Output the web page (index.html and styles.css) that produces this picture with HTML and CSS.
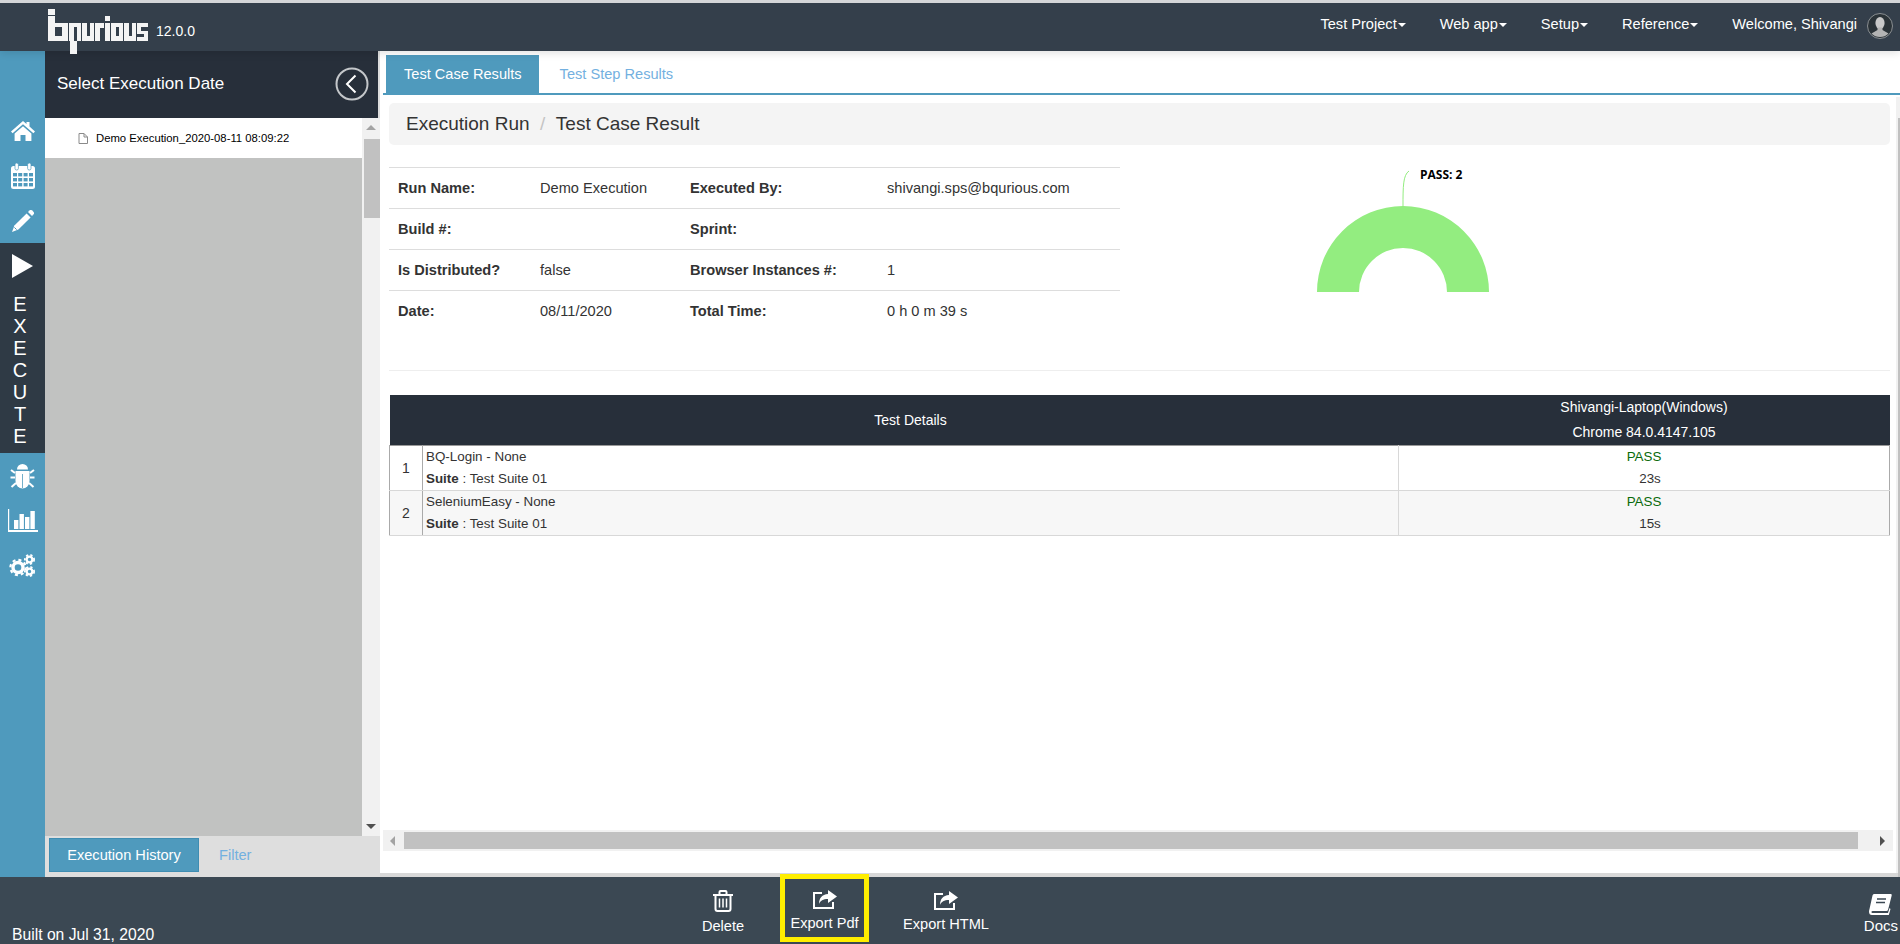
FILE: index.html
```html
<!DOCTYPE html>
<html lang="en">
<head>
  <meta charset="UTF-8">
  <title>bqurious - Test Case Result</title>
  <link rel="stylesheet" href="styles.css">
</head>
<body>
  <!-- Top bar -->
  <header class="topbar">
    <svg class="logo" width="101" height="45" viewBox="0 0 101 45" role="img" aria-label="bqurious">
      <g fill="#f4f4f4">
        <rect x="0" y="0" width="7" height="6"/><rect x="0" y="7" width="7" height="25"/><rect x="7" y="14" width="13" height="4"/><rect x="14" y="18" width="6" height="14"/><rect x="7" y="27" width="7" height="5"/>
        <rect x="21" y="14" width="5" height="18"/><rect x="26" y="14" width="7" height="4"/><rect x="29" y="18" width="4" height="14"/><rect x="22" y="32" width="7" height="13"/>
        <rect x="34" y="14" width="5" height="18"/><rect x="39" y="27" width="3" height="5"/><rect x="42" y="14" width="4" height="18"/>
        <rect x="47" y="14" width="5" height="18"/><rect x="52" y="14" width="4" height="5"/>
        <rect x="57" y="7" width="5" height="5"/><rect x="57" y="14" width="5" height="18"/>
        <rect x="63" y="14" width="5" height="18"/><rect x="68" y="14" width="3" height="4"/><rect x="68" y="27" width="3" height="5"/><rect x="71" y="14" width="4" height="18"/>
        <rect x="76" y="14" width="5" height="18"/><rect x="81" y="27" width="3" height="5"/><rect x="84" y="14" width="4" height="18"/>
        <rect x="89" y="14" width="11" height="4"/><rect x="89" y="18" width="4" height="6"/><rect x="89" y="22" width="11" height="3"/><rect x="96" y="25" width="4" height="7"/><rect x="89" y="28" width="7" height="4"/>
      </g>
    </svg>
    <span class="version">12.0.0</span>
    <nav class="topnav">
      <a class="nav-link">Test Project<i class="caret"></i></a>
      <a class="nav-link">Web app<i class="caret"></i></a>
      <a class="nav-link">Setup<i class="caret"></i></a>
      <a class="nav-link">Reference<i class="caret"></i></a>
      <span class="nav-link">Welcome, Shivangi</span>
      <svg class="avatar" width="26" height="26" viewBox="0 0 26 26">
        <circle cx="13" cy="13" r="12.5" fill="#2b3338" stroke="#8a8f92"/>
        <ellipse cx="13" cy="10" rx="4.6" ry="6" fill="#c9c9c9"/>
        <path d="M10.5 14.5 V17 L4.5 20.5 A12 12 0 0 0 21.5 20.5 L15.5 17 V14.5Z" fill="#b4b4b4"/>
      </svg>
    </nav>
  </header>

  <div class="middle">
    <!-- Icon rail -->
    <aside class="rail">
      <a class="rail-item rail-home">
        <svg width="24" height="20" viewBox="0 0 24 20" fill="#fff"><path d="M12 0 L15.5 3 V1 H18.5 V5.6 L24 10.4 L22.4 12.2 L12 3.2 L1.6 12.2 L0 10.4Z"/><path d="M12 5.2 L20.4 12.4 V20 H14.5 V14 H9.5 V20 H3.6 V12.4Z"/></svg>
      </a>
      <a class="rail-item rail-cal">
        <svg width="24" height="26" viewBox="0 0 24 26">
          <rect x="0" y="3" width="24" height="23" rx="2.5" fill="#fff"/>
          <rect x="4" y="0" width="3.4" height="7" rx="1.6" fill="#fff" stroke="#4f9abd" stroke-width=".7"/><rect x="16.6" y="0" width="3.4" height="7" rx="1.6" fill="#fff" stroke="#4f9abd" stroke-width=".7"/>
          <g fill="#4f9abd"><rect x="2" y="10" width="4" height="3.4"/><rect x="7.2" y="10" width="4" height="3.4"/><rect x="12.6" y="10" width="4" height="3.4"/><rect x="18" y="10" width="4" height="3.4"/><rect x="2" y="15" width="4" height="3.4"/><rect x="7.2" y="15" width="4" height="3.4"/><rect x="12.6" y="15" width="4" height="3.4"/><rect x="18" y="15" width="4" height="3.4"/><rect x="2" y="20" width="4" height="3.4"/><rect x="7.2" y="20" width="4" height="3.4"/><rect x="12.6" y="20" width="4" height="3.4"/><rect x="18" y="20" width="4" height="3.4"/></g>
        </svg>
      </a>
      <a class="rail-item rail-pencil">
        <svg width="22" height="22" viewBox="0 0 22 22" fill="#fff"><path d="M14.6 3.4 L18.6 7.4 L6.4 19.6 L0 22 L2.4 15.6Z"/><path d="M16 2 L17.4 .6 A2 2 0 0 1 20.2 .6 L21.4 1.8 A2 2 0 0 1 21.4 4.6 L20 6Z"/><path d="M2.4 17.4 L4.6 19.6" stroke="#4f9abd" stroke-width="1"/></svg>
      </a>
      <a class="rail-item rail-active">
        <svg width="21" height="24" viewBox="0 0 21 24" fill="#fff"><path d="M0 0 L21 12 L0 24Z"/></svg>
        <span class="rail-word">EXECUTE</span>
      </a>
      <a class="rail-item rail-bug">
        <svg width="25" height="26" viewBox="0 0 25 26" fill="#fff">
          <path d="M7 6.5 A5.5 5.5 0 0 1 18 6.5Z"/><path d="M5.5 8 H19.5 V18 A7 7.5 0 0 1 5.5 18Z"/>
          <g stroke="#fff" stroke-width="2" fill="none"><path d="M5 10 L1 7"/><path d="M20 10 L24 7"/><path d="M5 14.5 H.5"/><path d="M20 14.5 H24.5"/><path d="M6 20 L1.5 24"/><path d="M19 20 L23.5 24"/></g>
          <path d="M12.5 11 V25" stroke="#4f9abd" stroke-width=".8"/>
        </svg>
      </a>
      <a class="rail-item rail-bars">
        <svg width="30" height="23" viewBox="0 0 30 23" fill="#fff"><path d="M0 0 H1.2 V21 H30 V23 H0Z"/><rect x="6" y="11" width="4.4" height="9"/><rect x="11.5" y="5" width="4.4" height="15"/><rect x="17" y="8" width="4.4" height="12"/><rect x="22.4" y="2" width="4.4" height="18"/></svg>
      </a>
      <a class="rail-item rail-gears">
        <svg width="27" height="23" viewBox="0 0 27 23" fill="none" stroke="#fff">
          <circle cx="9" cy="13.5" r="5" stroke-width="3.4"/><circle cx="9" cy="13.5" r="7.6" stroke-width="2.2" stroke-dasharray="3 3"/>
          <circle cx="20.5" cy="5.5" r="2.8" stroke-width="2.2"/><circle cx="20.5" cy="5.5" r="4.6" stroke-width="1.8" stroke-dasharray="2.2 2.2"/>
          <circle cx="20.5" cy="17.5" r="2.8" stroke-width="2.2"/><circle cx="20.5" cy="17.5" r="4.6" stroke-width="1.8" stroke-dasharray="2.2 2.2"/>
        </svg>
      </a>
    </aside>

    <!-- Execution date panel -->
    <section class="panel">
      <div class="panel-head">
        <span>Select Execution Date</span>
        <svg width="34" height="34" viewBox="0 0 34 34" fill="none" stroke="#c4c7ca"><circle cx="17" cy="17" r="15.5" stroke-width="2"/><path d="M20.5 8.5 L12 17 L20.5 25.5" stroke="#fff" stroke-width="2"/></svg>
      </div>
      <div class="panel-list">
        <div class="panel-rows">
          <div class="run-row">
            <svg width="10" height="11" viewBox="0 0 10 11" fill="#fff" stroke="#8a8a8a"><path d="M1 .5 H6 L9.5 4 V10.5 H1Z"/><path d="M6 .5 V4 H9.5" fill="none"/></svg>
            <span>Demo Execution_2020-08-11 08:09:22</span>
          </div>
        </div>
        <div class="vscroll">
          <i class="arrow-up"></i>
          <div class="vscroll-thumb"></div>
          <i class="arrow-down"></i>
        </div>
      </div>
      <div class="panel-tabs">
        <a class="panel-tab panel-tab-on">Execution History</a>
        <a class="panel-tab">Filter</a>
      </div>
    </section>

    <!-- Results -->
    <main class="main">
      <div class="tabs">
        <a class="tab tab-on">Test Case Results</a>
        <a class="tab">Test Step Results</a>
      </div>
      <div class="main-body">
        <div class="content">
          <div class="breadcrumb"><span>Execution Run</span><span class="sep">/</span><span>Test Case Result</span></div>

          <div class="summary">
            <table class="info">
              <tr><th>Run Name:</th><td>Demo Execution</td><th>Executed By:</th><td>shivangi.sps@bqurious.com</td></tr>
              <tr><th>Build #:</th><td></td><th>Sprint:</th><td></td></tr>
              <tr><th>Is Distributed?</th><td>false</td><th>Browser Instances #:</th><td>1</td></tr>
              <tr><th>Date:</th><td>08/11/2020</td><th>Total Time:</th><td>0 h 0 m 39 s</td></tr>
            </table>
            <svg class="chart" width="770" height="130" viewBox="0 0 770 130">
              <path d="M197 125 A86 86 0 0 1 369 125 H327 A44 44 0 0 0 239 125Z" fill="#93ed80"/>
              <path d="M283 39 C283 20 283 8 289 4" fill="none" stroke="#93ed80" stroke-width="1"/>
              <text x="300" y="12" class="chart-label">PASS: 2</text>
            </svg>
          </div>

          <table class="details">
            <colgroup><col class="col-num"><col class="col-name"><col></colgroup>
            <thead>
              <tr><th></th><th>Test Details</th><th>Shivangi-Laptop(Windows)<br>Chrome 84.0.4147.105</th></tr>
            </thead>
            <tbody>
              <tr>
                <td class="num">1</td>
                <td>BQ-Login - None<br><b>Suite</b> : Test Suite 01</td>
                <td class="res"><span class="pass">PASS</span><br><span class="time">23s</span></td>
              </tr>
              <tr class="alt">
                <td class="num">2</td>
                <td>SeleniumEasy - None<br><b>Suite</b> : Test Suite 01</td>
                <td class="res"><span class="pass">PASS</span><br><span class="time">15s</span></td>
              </tr>
            </tbody>
          </table>

          <div class="hscroll">
            <i class="arrow-left"></i>
            <div class="hscroll-thumb"></div>
            <i class="arrow-right"></i>
          </div>
        </div>
        <div class="page-scroll"><div class="page-scroll-thumb"></div></div>
      </div>
    </main>
  </div>

  <!-- Footer actions -->
  <footer class="footer">
    <span class="built">Built on Jul 31, 2020</span>
    <a class="action action-delete">
      <svg width="20" height="22" viewBox="0 0 20 22" fill="none" stroke="#fff" stroke-width="2"><path d="M0 5 H20"/><path d="M6.5 4.5 V2 Q6.5 1 7.5 1 H12.5 Q13.5 1 13.5 2 V4.5"/><path d="M2.5 5 V19 Q2.5 21 4.5 21 H15.5 Q17.5 21 17.5 19 V5"/><path d="M6.5 8.5 V17.5 M10 8.5 V17.5 M13.5 8.5 V17.5" stroke-width="1.5"/></svg>
      <span>Delete</span>
    </a>
    <a class="action action-pdf">
      <svg width="24" height="19" viewBox="0 0 24 19" fill="none" stroke="#fff"><path d="M9 3 H1 V18 H20 V12" stroke-width="2"/><path d="M15 0 L24 6.5 L15 13 V9 C10 9 7.5 10.5 6 14 C6 8 9 4.5 15 4Z" fill="#fff" stroke="none"/></svg>
      <span>Export Pdf</span>
    </a>
    <a class="action action-html">
      <svg width="24" height="19" viewBox="0 0 24 19" fill="none" stroke="#fff"><path d="M9 3 H1 V18 H20 V12" stroke-width="2"/><path d="M15 0 L24 6.5 L15 13 V9 C10 9 7.5 10.5 6 14 C6 8 9 4.5 15 4Z" fill="#fff" stroke="none"/></svg>
      <span>Export HTML</span>
    </a>
    <a class="action action-docs">
      <svg width="23" height="21" viewBox="0 0 23 21" fill="#fff"><path d="M5 0 H22 Q23 0 22.7 1.5 L19 16 Q18.6 17 17.5 17 H3.5 Q2 17 2.5 18.5 Q3 19 4 19 H19 L20.5 14 L21.5 15 L19.8 21 H3 Q0 21 0 17.5 Q0 16.5 .5 15 L3.5 1.5 Q3.8 0 5 0Z"/><path d="M8 5 H17 M7 8.5 H16" stroke="#3b4853" stroke-width="1.5"/></svg>
      <span>Docs</span>
    </a>
  </footer>
</body>
</html>
```

FILE: styles.css
```css
html, body {
  margin: 0;
  height: 100%;
}
body {
  display: flex;
  flex-direction: column;
  width: 1900px;
  height: 944px;
  overflow: hidden;
  font-family: "Liberation Sans", Arial, sans-serif;
  font-size: 14.6px;
  color: #333;
  background: #fff;
}
a {
  text-decoration: none;
  color: inherit;
}

/* top bar */
.topbar {
  flex: 0 0 51px;
  min-height: 0;
  box-sizing: border-box;
  display: flex;
  align-items: flex-start;
  border-top: 3px solid #d4d6d8;
  background: #343f4b;
  color: #fff;
  position: relative;
  z-index: 2;
  box-shadow: 0 2px 8px rgba(0, 0, 0, 0.12);
}
.logo {
  margin: 6px 0 0 48px;
  flex: none;
}
.version {
  margin: 20px 0 0 7px;
  font-size: 14px;
}
.topnav {
  margin-left: auto;
  display: flex;
  align-items: flex-start;
  gap: 34px;
  padding-right: 7px;
}
.nav-link {
  margin-top: 13px;
  line-height: 16px;
}
.caret {
  display: inline-block;
  margin-left: 1px;
  vertical-align: 2px;
  border-top: 4px solid #fff;
  border-left: 4.5px solid transparent;
  border-right: 4.5px solid transparent;
}
.avatar {
  margin: 10px 0 0 -24px;
}

.middle {
  flex: 1;
  display: flex;
  min-height: 0;
}

/* icon rail */
.rail {
  flex: 0 0 45px;
  padding-top: 70px;
  background: #4f9abd;
  box-sizing: border-box;
  display: flex;
  flex-direction: column;
  align-items: center;
}
.rail-item {
  display: flex;
  flex-direction: column;
  align-items: center;
  width: 100%;
}
.rail-cal { margin-top: 22px; }
.rail-pencil { margin-top: 21px; }
.rail-active {
  margin-top: 11px;
  padding: 11px 0 6px;
  background: #2f3a45;
  color: #fff;
}
.rail-word {
  margin: 15px 5px 0 0;
  width: 22px;
  font-size: 20px;
  line-height: 22px;
  text-align: center;
  word-break: break-all;
}
.rail-bug { margin-top: 10px; }
.rail-bars { margin-top: 20px; }
.rail-gears { margin-top: 22px; }

/* date panel */
.panel {
  flex: 0 0 335px;
  display: flex;
  flex-direction: column;
  background: #dedede;
}
.panel-head {
  flex: 0 0 67px;
  box-sizing: border-box;
  margin-right: 2px;
  padding: 0 9px 2px 12px;
  display: flex;
  align-items: center;
  justify-content: space-between;
  background: #272f3a;
  color: #fff;
  font-size: 17px;
}
.panel-list {
  flex: 1;
  display: flex;
  min-height: 0;
}
.panel-rows {
  flex: 1;
  background: #c1c2c1;
}
.run-row {
  height: 40px;
  display: flex;
  align-items: center;
  padding-left: 33px;
  background: #fff;
  color: #000;
  font-size: 11.3px;
}
.run-row svg {
  margin-right: 8px;
}
.vscroll {
  flex: 0 0 18px;
  position: relative;
  background: #f1f1f1;
}
.vscroll-thumb {
  position: absolute;
  left: 2px;
  right: 0;
  top: 21px;
  height: 79px;
  background: #c1c1c1;
}
.arrow-up, .arrow-down, .arrow-left, .arrow-right {
  position: absolute;
  width: 0;
  height: 0;
  border-style: solid;
  border-color: transparent;
}
.arrow-up {
  top: 7px;
  left: 4px;
  border-width: 0 5px 5px;
  border-bottom-color: #a3a3a3;
}
.arrow-down {
  bottom: 7px;
  left: 4px;
  border-width: 5px 5px 0;
  border-top-color: #505050;
}
.panel-tabs {
  flex: 0 0 41px;
  box-sizing: border-box;
  padding: 2px 0 5px 4px;
  display: flex;
}
.panel-tab {
  display: flex;
  align-items: center;
  padding: 0 20px;
  color: #73b0e0;
}
.panel-tab-on {
  width: 150px;
  box-sizing: border-box;
  justify-content: center;
  padding: 0;
  background: #4f9abd;
  border: 1px solid #3f8db2;
  color: #fff;
}

/* results */
.main {
  flex: 1;
  min-width: 0;
  display: flex;
  flex-direction: column;
}
.tabs {
  flex: 0 0 44px;
  box-sizing: border-box;
  margin-left: 3px;
  padding: 4px 0 0 3px;
  display: flex;
  border-bottom: 2px solid #4f9abd;
}
.tab {
  display: flex;
  align-items: center;
  padding: 0 17px 0 21px;
  color: #73b0e0;
}
.tab-on {
  padding: 0 17px 0 18px;
  background: #4f9abd;
  color: #fff;
}
.main-body {
  flex: 1;
  display: flex;
  min-height: 0;
  border-bottom: 4px solid #d8d8d8;
}
.content {
  flex: 1;
  min-width: 0;
  display: flex;
  flex-direction: column;
  padding: 8px 6px 0 9px;
}
.breadcrumb {
  flex: 0 0 42px;
  display: flex;
  align-items: center;
  padding-left: 17px;
  border-radius: 5px;
  background: #f4f4f4;
  font-size: 19px;
}
.sep {
  margin: 0 10.5px;
  color: #c4c4c4;
}
.summary {
  flex: 0 0 204px;
  box-sizing: border-box;
  margin-top: 22px;
  display: flex;
  align-items: flex-start;
  border-bottom: 1px solid #eee;
}
.info {
  flex: 0 0 731px;
  width: 731px;
  table-layout: fixed;
  border-collapse: collapse;
}
.info th, .info td {
  height: 40px;
  padding: 0;
  border-top: 1px solid #ddd;
  text-align: left;
}
.info th {
  font-weight: bold;
}
.info th:nth-child(1) { width: 151px; padding-left: 9px; box-sizing: border-box; }
.info td:nth-child(2) { width: 150px; }
.info th:nth-child(3) { width: 197px; }
.chart {
  flex: none;
}
.chart-label {
  font-family: "Open Sans", sans-serif;
  font-size: 12px;
  font-weight: 700;
  fill: #000;
}
.details {
  margin-top: 24px;
  width: 100%;
  table-layout: fixed;
  border-collapse: collapse;
  font-size: 13.4px;
  line-height: 22px;
}
.col-num { width: 33px; }
.col-name { width: 976px; }
.details thead th {
  padding: 0;
  height: 50px;
  background: #272f3a;
  color: #fff;
  font-size: 14px;
  font-weight: normal;
  line-height: 25px;
}
.details td {
  padding: 0 3px;
  height: 44px;
  border: 1px solid #d8d8d8;
}
.details td.num {
  text-align: center;
  border-left-color: #aaa;
  border-right-color: #aaa;
  font-size: 14px;
}
.details td.res {
  text-align: center;
  border-left-color: #666;
  border-right-color: #aaa;
}
.details tbody tr:first-child td {
  border-top-color: #999;
}
.alt {
  background: #f7f7f7;
}
.pass {
  color: #0a6a0a;
}
.time {
  padding-left: 12px;
}
.hscroll {
  margin: auto -3px 22px -6px;
  flex: 0 0 21px;
  position: relative;
  background: #f1f1f1;
}
.hscroll-thumb {
  position: absolute;
  left: 21px;
  right: 35px;
  top: 2px;
  bottom: 2px;
  background: #c1c1c1;
}
.arrow-left {
  left: 7px;
  top: 6px;
  border-width: 5px 5px 5px 0;
  border-right-color: #a3a3a3;
}
.arrow-right {
  right: 8px;
  top: 6px;
  border-width: 5px 0 5px 5px;
  border-left-color: #505050;
}
.page-scroll {
  flex: 0 0 4px;
  margin-top: 2px;
  background: #f1f1f1;
}
.page-scroll-thumb {
  margin: 21px 0 0 2px;
  height: 100%;
  background: #c1c1c1;
}

/* footer */
.footer {
  flex: 0 0 65px;
  display: flex;
  align-items: flex-start;
  background: #3b4853;
  color: #fff;
}
.built {
  flex: 0 0 676px;
  box-sizing: border-box;
  padding: 49px 0 0 12px;
  font-size: 15.7px;
  line-height: 18px;
}
.action {
  display: flex;
  flex-direction: column;
  align-items: center;
  box-sizing: border-box;
  height: 65px;
  padding-top: 13px;
}
.action span {
  margin-top: 5px;
  line-height: 18px;
}
.action-delete { width: 94px; }
.action-pdf {
  width: 89px;
  margin-left: 10px;
  margin-top: -3px;
  height: 68px;
  padding-top: 11px;
  border: 5px solid #ffee00;
  position: relative;
}
.action-html {
  margin-left: 34px;
  padding-top: 14px;
  width: 86px;
}
.action-docs {
  margin-left: auto;
  padding-top: 17px;
  padding-right: 2px;
  font-size: 15px;
}
.action-docs span {
  margin-top: 2px;
}
```
